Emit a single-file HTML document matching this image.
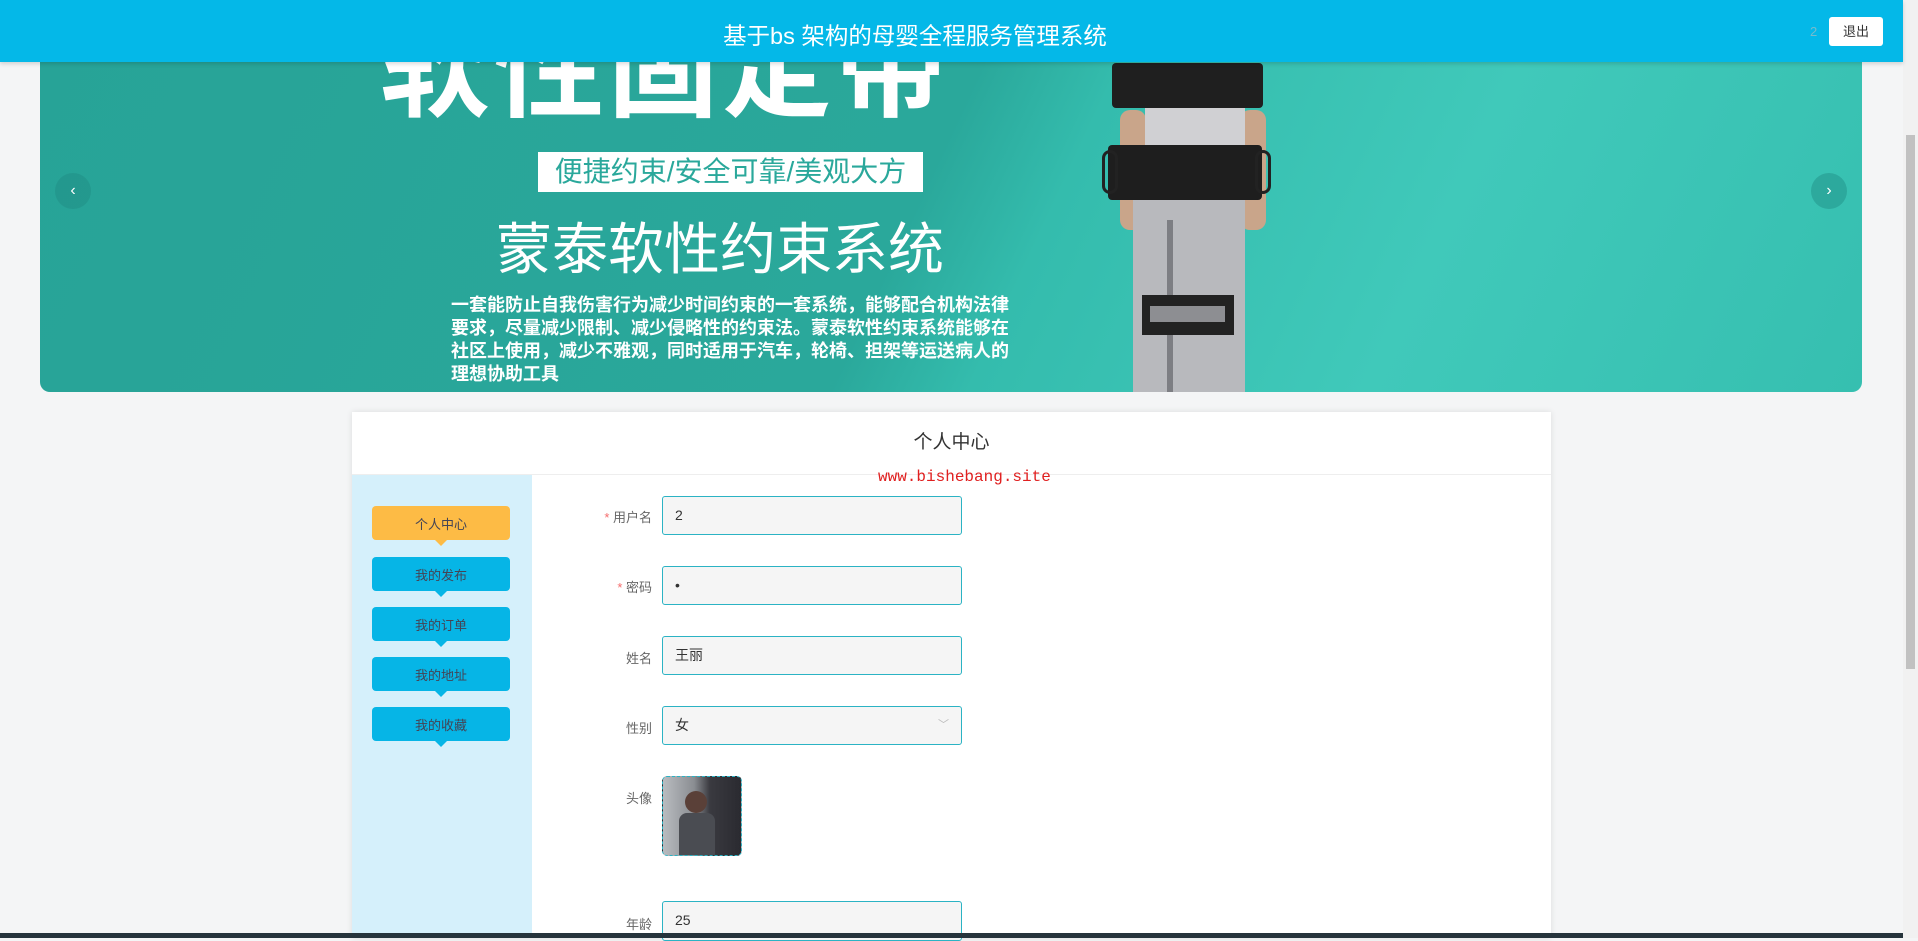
<!DOCTYPE html>
<html><head><meta charset="utf-8"><style>
*{margin:0;padding:0;box-sizing:border-box}
body{width:1918px;height:938px;overflow:hidden;background:#f4f5f6;font-family:"Liberation Sans","Noto Sans CJK SC",sans-serif;position:relative}
.hdr{position:absolute;left:0;top:0;width:1903px;height:62px;background:#04b8e8;box-shadow:0 2px 4px rgba(0,0,0,.15);z-index:5}
.hdr .t{position:absolute;left:0;width:1830px;text-align:center;top:17px;color:#fff;font-size:23.5px}
.hdr .u{position:absolute;left:1810px;top:24px;color:#7bc;font-size:13px}
.hdr .b{position:absolute;left:1829px;top:17px;width:54px;height:29px;background:#fff;border-radius:3px;font-size:13px;color:#333;text-align:center;line-height:29px}
.ban{position:absolute;left:40px;top:40px;width:1822px;height:352px;border-radius:0 0 10px 10px;overflow:hidden;background:linear-gradient(115deg,#27a397 0%,#2aa89b 48%,#34bcad 55%,#40c9ba 75%,#36bfb0 100%)}
.w{position:absolute;color:#fff;font-weight:bold}
.arr{position:absolute;width:36px;height:36px;border-radius:50%;background:rgba(30,140,130,.45);color:#fff;text-align:center;line-height:36px;font-size:16px}
.dot{position:absolute;top:367px;width:10px;height:10px;border-radius:5px;background:rgba(255,255,255,.5)}
.card{position:absolute;left:352px;top:412px;width:1199px;height:526px;background:#fff;box-shadow:0 0 6px rgba(0,0,0,.1)}
.side{position:absolute;left:352px;top:475px;width:180px;height:463px;background:#d5f0fb}
.sb{position:absolute;left:372px;width:138px;height:34px;border-radius:4px;background:#06b5e6;color:#445;font-size:13px;text-align:center;line-height:38px}
.sb:after{content:"";position:absolute;left:62px;bottom:-6px;border:7px solid transparent;border-top-color:inherit;border-bottom:0}
.lab{position:absolute;width:90px;left:562px;text-align:right;font-size:13px;color:#666}
.lab i{color:#f56c6c;font-style:normal}
.in{position:absolute;left:662px;width:300px;height:39px;border:1px solid #2bb3c4;border-radius:3px;background:#f5f5f5;font-size:14px;color:#333;padding-left:12px;line-height:37px}
.p{position:absolute}
</style></head><body>
<div class="ban">
 <div class="w" style="left:340px;top:-60px;font-size:110px;letter-spacing:4px">软性固定带</div>
 <div style="position:absolute;left:498px;top:112px;width:385px;height:40px;background:#fff;color:#2aa89b;font-size:28px;text-align:center;line-height:40px">便捷约束/安全可靠/美观大方</div>
 <div class="w" style="left:456px;top:165px;font-size:56px;font-weight:normal">蒙泰软性约束系统</div>
 <div class="w" style="left:411px;top:254px;width:572px;font-size:18px;line-height:23px">一套能防止自我伤害行为减少时间约束的一套系统，能够配合机构法律要求，尽量减少限制、减少侵略性的约束法。蒙泰软性约束系统能够在社区上使用，减少不雅观，同时适用于汽车，轮椅、担架等运送病人的理想协助工具</div>
 <div class="p" style="left:1080px;top:70px;width:26px;height:120px;background:#c9a58a;border-radius:10px"></div>
 <div class="p" style="left:1200px;top:70px;width:26px;height:120px;background:#c9a58a;border-radius:10px"></div>
 <div class="p" style="left:1105px;top:66px;width:100px;height:44px;background:#d0d0d3"></div>
 <div class="p" style="left:1072px;top:23px;width:151px;height:45px;background:#1f1f1f;border-radius:4px"></div>
 <div class="p" style="left:1068px;top:105px;width:154px;height:55px;background:#1e1e1e;border-radius:4px"></div>
 <div class="p" style="left:1062px;top:110px;width:16px;height:44px;border:3px solid #222;border-radius:8px"></div>
 <div class="p" style="left:1215px;top:110px;width:16px;height:44px;border:3px solid #222;border-radius:8px"></div>
 <div class="p" style="left:1093px;top:160px;width:112px;height:200px;background:#b8b9bd"></div>
 <div class="p" style="left:1127px;top:180px;width:6px;height:180px;background:#7d7e83"></div>
 <div class="p" style="left:1102px;top:255px;width:92px;height:40px;background:#222"></div>
 <div class="p" style="left:1110px;top:266px;width:75px;height:16px;background:#8d8e92"></div>
 <div class="arr" style="left:15px;top:133px">‹</div>
 <div class="arr" style="left:1771px;top:133px">›</div>
 <div class="dot" style="left:880px;width:24px;background:#fff"></div>
 <div class="dot" style="left:913px"></div>
 <div class="dot" style="left:932px"></div>
</div>
<div class="hdr"><div class="t">基于bs 架构的母婴全程服务管理系统</div><div class="u">2</div><div class="b">退出</div></div>
<div class="card"><div style="text-align:center;margin-top:15px;font-size:19px;color:#333">个人中心</div><div style="position:absolute;top:62px;left:0;right:0;height:1px;background:#eee"></div></div>
<div style="position:absolute;left:878px;top:468px;color:#e02020;font-family:'Liberation Mono',monospace;font-size:16px">www.bishebang.site</div>
<div class="side"></div>
<div class="sb" style="top:506px;background:#fdbb45;border-color:#fdbb45">个人中心</div>
<div class="sb" style="top:557px;border-color:#06b5e6">我的发布</div>
<div class="sb" style="top:607px;border-color:#06b5e6">我的订单</div>
<div class="sb" style="top:657px;border-color:#06b5e6">我的地址</div>
<div class="sb" style="top:707px;border-color:#06b5e6">我的收藏</div>
<div class="lab" style="top:507px"><i>* </i>用户名</div><div class="in" style="top:496px">2</div>
<div class="lab" style="top:577px"><i>* </i>密码</div><div class="in" style="top:566px">•</div>
<div class="lab" style="top:648px">姓名</div><div class="in" style="top:636px">王丽</div>
<div class="lab" style="top:718px">性别</div><div class="in" style="top:706px">女<span style="position:absolute;right:12px;color:#bbb;font-size:11px">﹀</span></div>
<div class="lab" style="top:788px">头像</div>
<div style="position:absolute;left:662px;top:776px;width:80px;height:80px;border:1px dashed #2bb3c4;border-radius:5px;background:linear-gradient(90deg,#b9bcc0 0%,#8a8d92 40%,#3a3a40 60%,#2a2a30 100%)"><div style="position:absolute;left:22px;top:14px;width:22px;height:22px;border-radius:50%;background:#5a4038"></div><div style="position:absolute;left:16px;top:36px;width:36px;height:42px;background:#4a4c52;border-radius:8px 8px 0 0"></div></div>
<div class="lab" style="top:914px">年龄</div><div class="in" style="top:901px;height:40px">25</div>
<div style="position:absolute;left:0;top:933px;width:1903px;height:5px;background:#26343c"></div>
<div style="position:absolute;left:1903px;top:0;width:15px;height:938px;background:#f1f1f1"></div>
<div style="position:absolute;left:1906px;top:135px;width:9px;height:534px;background:#c1c1c1"></div>
</body></html>
